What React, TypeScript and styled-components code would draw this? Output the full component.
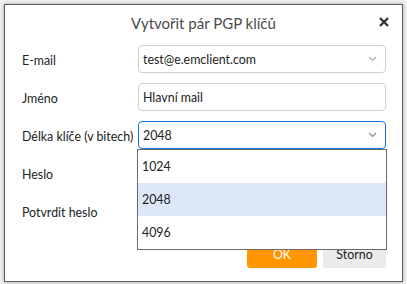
import React from "react";
import styled, { createGlobalStyle } from "styled-components";

const GlobalStyle = createGlobalStyle`
  html, body {
    margin: 0;
    padding: 0;
    background: #f2f2f2;
  }
  body {
    font-family: Lato, "Open Sans", sans-serif;
  }
`;

const Window = styled.div`
  box-sizing: border-box;
  margin: 4px;
  width: 399px;
  height: 278px;
  background: #fff;
  border: 1px solid #5e5e5e;
  box-shadow: 0 0 4px rgba(0, 0, 0, 0.35);
  display: flex;
  flex-direction: column;
`;

const TitleBar = styled.div`
  height: 35px;
  position: relative;
  display: flex;
  align-items: center;
  justify-content: center;
  font-size: 15px;
  color: #4a4a4a;
`;

const CloseButton = styled.div`
  position: absolute;
  right: 12px;
  top: 11px;
  width: 12px;
  height: 12px;
  display: flex;
  cursor: pointer;
`;

const Form = styled.div`
  display: grid;
  grid-template-columns: 116px 248px;
  grid-auto-rows: 28px;
  row-gap: 10px;
  padding: 5px 0 0 17px;
`;

const Label = styled.div`
  display: flex;
  align-items: center;
  white-space: nowrap;
  font-size: 12.4px;
  color: #222;
  padding-top: 2px;
`;

const Field = styled.div<{ $focused?: boolean }>`
  position: relative;
  box-sizing: border-box;
  border: 1px solid ${({ $focused }) => ($focused ? "#1a73d9" : "#d0d0d0")};
  border-radius: 4px;
  display: flex;
  align-items: center;
  padding: 0 4px;
  font-size: 12.4px;
  color: #222;
  background: #fff;
`;

const FieldText = styled.span`
  flex: 1;
`;

const Chevron = styled.svg`
  width: 9px;
  height: 6px;
  margin-right: 4px;
`;

const List = styled.div`
  position: absolute;
  left: -2px;
  right: -2px;
  top: 27px;
  box-sizing: border-box;
  border: 1px solid #6a6a6a;
  background: #fff;
  z-index: 5;
`;

const Item = styled.div<{ $active?: boolean }>`
  height: 33px;
  display: flex;
  align-items: center;
  padding-left: 4px;
  font-size: 12.4px;
  color: #222;
  background: ${({ $active }) => ($active ? "#dce8f8" : "#fff")};
`;

const Footer = styled.div`
  display: flex;
  justify-content: flex-end;
  gap: 6px;
  padding: 15px 16px 0 0;
`;

const Button = styled.button<{ $primary?: boolean }>`
  height: 28px;
  width: ${({ $primary }) => ($primary ? "70px" : "63px")};
  border: none;
  border-radius: 3px;
  font-family: inherit;
  font-size: 12.4px;
  background: ${({ $primary }) => ($primary ? "#ff9500" : "#ebebeb")};
  color: ${({ $primary }) => ($primary ? "#fff" : "#222")};
  padding: 0;
`;

const ChevronIcon = ({ color }: { color: string }) => (
  <Chevron viewBox="0 0 9 6">
    <path d="M1 1 L4.5 4.5 L8 1" fill="none" stroke={color} strokeWidth="1.2" />
  </Chevron>
);

export default function App() {
  return (
    <>
      <GlobalStyle />
      <Window>
        <TitleBar>
          Vytvořit pár PGP klíčů
          <CloseButton>
            <svg width="12" height="12" viewBox="0 0 12 12">
              <path d="M2 2 L10 10 M10 2 L2 10" stroke="#333" strokeWidth="2.4" />
            </svg>
          </CloseButton>
        </TitleBar>
        <Form>
          <Label>E-mail</Label>
          <Field>
            <FieldText>test@e.emclient.com</FieldText>
            <ChevronIcon color="#b0b0b0" />
          </Field>
          <Label>Jméno</Label>
          <Field>
            <FieldText>Hlavní mail</FieldText>
          </Field>
          <Label>Délka klíče (v bitech)</Label>
          <Field $focused>
            <FieldText>2048</FieldText>
            <ChevronIcon color="#8a8a8a" />
            <List>
              <Item>1024</Item>
              <Item $active>2048</Item>
              <Item>4096</Item>
            </List>
          </Field>
          <Label>Heslo</Label>
          <Field />
          <Label>Potvrdit heslo</Label>
          <Field />
        </Form>
        <Footer>
          <Button $primary>OK</Button>
          <Button>Storno</Button>
        </Footer>
      </Window>
    </>
  );
}
